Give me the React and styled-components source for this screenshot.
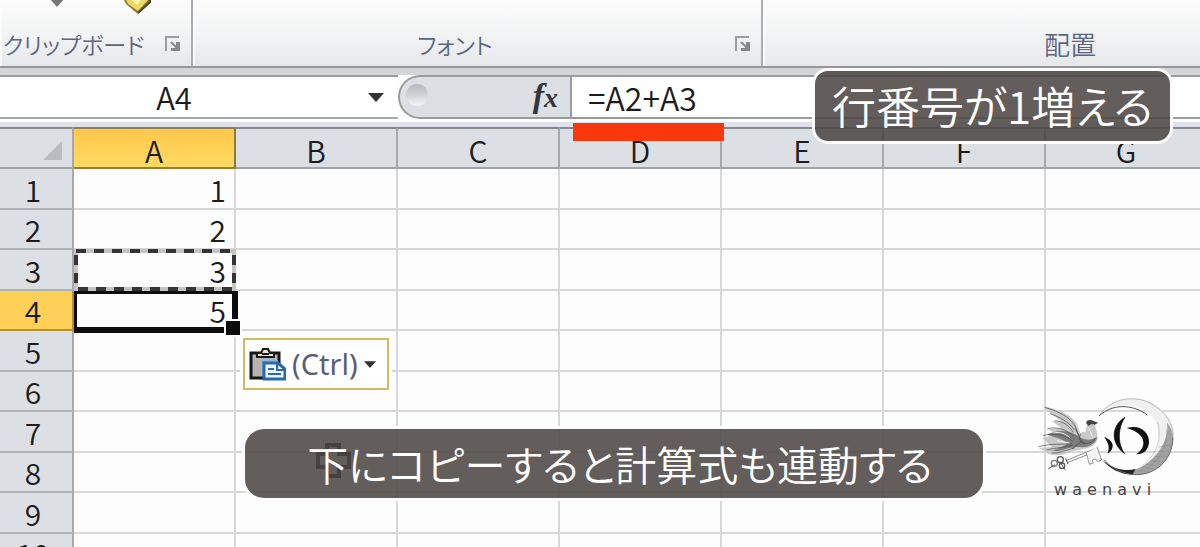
import React from 'react';
import styled, { createGlobalStyle } from 'styled-components';

const GlobalStyle = createGlobalStyle`
  * {
    box-sizing: border-box;
  }

  body {
    margin: 0;
    background: #fdfdfd;
    font-family: 'Noto Sans CJK JP', 'Liberation Sans', sans-serif;
    color: #1c1c1c;
  }

  button,
  input {
    margin: 0;
    padding: 0;
    border: 0;
    background: none;
    font: inherit;
    color: inherit;
  }

  svg {
    display: block;
  }
`;

const Screen = styled.main`
  position: relative;
  height: 100vh;
  overflow: hidden;
`;

const Ribbon = styled.div`
  display: flex;
  height: 68px;
  overflow: hidden;
  background: linear-gradient(#fcfcfc, #f3f4f5 50%, #e6e8ea);
  border-bottom: 2px solid #94989c;
`;

const Group = styled.section`
  flex: 0 0 ${(props) => props.$width}px;
  min-width: 0;
  display: flex;
  flex-direction: column;
  border-right: 2px solid #a9acb0;
  box-shadow: inset 2px 0 #fbfbfb;
`;

const GroupTools = styled.div`
  display: flex;
  gap: 60px;
  height: 26px;
  padding-left: 50px;
`;

const GroupFooter = styled.div`
  display: flex;
  align-items: center;
  height: 36px;

  h2 {
    flex: 1;
    min-width: 0;
    margin: 0;
    font-size: ${(props) => (props.$kanji ? 26 : 23)}px;
    font-weight: 350;
    line-height: 36px;
    text-align: center;
    white-space: nowrap;
    font-feature-settings: 'palt';
    color: #5d6580;
  }

  button {
    flex: 0 0 44px;
    padding-left: 18px;
  }
`;

const FormulaBar = styled.div`
  display: flex;
  height: 59px;
  padding: 7px 0 8px;
  background: linear-gradient(#d3d6d9 7px, #fdfdfd 7px, #fdfdfd 54px, #dfe2ea 54px);
`;

const NameBox = styled.div`
  flex: 0 0 398px;
  display: flex;
  align-items: center;
  background: #fff;
  border-top: 2px solid #999c9f;
  border-bottom: 2px solid #a6a9ac;

  input {
    width: 348px;
    font-size: 31px;
    font-weight: 350;
    line-height: 36px;
    text-align: center;
  }

  button {
    margin-left: 20px;
  }
`;

const FunctionArea = styled.div`
  flex: 0 0 172px;
  display: flex;
  align-items: center;
  justify-content: space-between;
  padding: 0 12px 0 6px;
  background: #dce0e4;
  border: 2px solid #999c9f;
  border-right: 0;
  border-radius: 22px 0 0 22px;
`;

const Knob = styled.span`
  width: 22px;
  height: 22px;
  margin-bottom: 4px;
  border-radius: 50%;
  background: linear-gradient(#b4b8bc, #d0d3d6 50%, #f6f6f6);
`;

const FunctionButton = styled.button`
  && {
    font-family: 'Liberation Serif', serif;
    font-size: 34px;
    font-style: italic;
    font-weight: 700;
    line-height: 34px;
    color: #33373b;
  }

  small {
    font-size: 28px;
  }
`;

const FormulaField = styled.div`
  position: relative;
  flex: 1;
  background: #fff;
  border: 2px solid #999c9f;
  border-right: 0;

  input {
    width: 100%;
    padding: 2px 0 0 16px;
    font-size: 32px;
    font-weight: 350;
    line-height: 36px;
  }
`;

const RedMarker = styled.span`
  position: absolute;
  z-index: 1;
  top: 46px;
  left: 1px;
  width: 151px;
  height: 18px;
  background: #f8370c;
`;

const Grid = styled.table`
  width: 1208px;
  table-layout: fixed;
  border-collapse: separate;
  border-spacing: 0;
  font-size: 30px;
  line-height: 34px;

  th,
  td {
    padding: 0;
    font-weight: 350;
  }

  thead th {
    padding-top: 4px;
  }

  thead tr {
    height: 42px;
  }

  tbody tr {
    height: 40px;
  }

  tbody tr:nth-child(odd) {
    height: 41px;
  }
`;

const ColumnHead = styled.th`
  background: ${(props) => (props.$active ? 'linear-gradient(#ffc84c, #ffdb62)' : '#dce0e4')};
  border-top: 2px solid ${(props) => (props.$active ? '#8f8058' : '#85898e')};
  border-right: 2px solid ${(props) => (props.$active ? '#8d7a3c' : '#a5a9ad')};
  border-bottom: 2px solid ${(props) => (props.$active ? '#9a7c35' : '#a0a4a8')};
`;

const CornerHead = styled(ColumnHead)`
  svg {
    margin-left: 43px;
  }
`;

const RowHead = styled.th`
  && {
    padding-right: 6px;
  }
  background: ${(props) => (props.$active ? '#ffd058' : '#dce0e4')};
  border-right: 2px solid ${(props) => (props.$active ? '#b38f3a' : '#a5a9ad')};
  border-bottom: 2px solid ${(props) => (props.$active ? '#b38f3a' : '#b0b3b6')};
`;

const Cell = styled.td`
  position: relative;
  && {
    padding-right: 8px;
  }
  text-align: right;
  background: #fdfdfd;
  border-right: 2px solid #d7d8d9;
  border-bottom: 2px solid #d7d8d9;
`;

const Marquee = styled.svg`
  position: absolute;
  top: -1px;
  left: 0;
`;

const Selection = styled.span`
  position: absolute;
  z-index: 1;
  top: 0;
  left: 0;
  right: -4px;
  bottom: -4px;
  border: solid #0c0c0c;
  border-width: 3px 6px 6px 3px;

  &::after {
    content: '';
    position: absolute;
    right: -10px;
    bottom: -10px;
    width: 14px;
    height: 14px;
    background: #0c0c0c;
    border: 2px solid #fdfdfd;
  }
`;

const PasteOptions = styled.button`
  && {
    position: absolute;
    z-index: 2;
    top: 47px;
    left: 169px;
    display: flex;
    align-items: center;
    gap: 6px;
    width: 146px;
    height: 52px;
    padding-left: 4px;
    background: #fff;
    border: 2px solid #d3b961;
    box-shadow: 0 0 0 3px #fdfdfd;
    font-family: 'Noto Sans', sans-serif;
    font-size: 29px;
    font-weight: 400;
    color: #5a5e74;
  }
`;

const Caption = styled.p`
  margin: 0;
  padding: 0;
  background: rgba(77, 72, 69, 0.88);
  border: 3px solid #fdfdfd;
  font-weight: 350;
  line-height: 68px;
  text-align: center;
  white-space: nowrap;
  font-feature-settings: 'palt';
  color: #fff;
`;

const TopCaption = styled(Caption)`
  position: absolute;
  z-index: 3;
  top: 68px;
  right: 27px;
  width: 361px;
  height: 76px;
  border-radius: 16px;
  font-size: 44px;
`;

const BottomCaption = styled(Caption)`
  position: absolute;
  z-index: 3;
  top: 426px;
  left: 242px;
  width: 744px;
  height: 75px;
  padding-left: 12px;
  border-radius: 22px;
  font-size: 41px;
`;

const CellCursor = styled.svg`
  position: absolute;
  z-index: 2;
  top: 443px;
  left: 316px;
`;

const Brand = styled.div`
  position: absolute;
  z-index: 2;
  top: 397px;
  right: 26px;
  width: 137px;

  p {
    margin: 1px 0 0 17px;
    font-family: 'DejaVu Sans', sans-serif;
    font-size: 16px;
    line-height: 24px;
    white-space: nowrap;
    color: #444;
  }
`;

const Triangle = ({ width = 16, height = 9, color = '#333' }) => (
  <svg width={width} height={height} viewBox="0 0 16 9" aria-hidden="true">
    <path d="M0 0h16L8 9z" fill={color} />
  </svg>
);

const LauncherIcon = () => (
  <svg width="16" height="16" viewBox="0 0 16 16" fill="none" aria-hidden="true">
    <path d="M1 15V1h13" stroke="#9a9da2" strokeWidth="2" />
    <path d="M6 6l6 6" stroke="#85898e" strokeWidth="2" />
    <path d="M15 6v9H6v-3h5V6z" fill="#85898e" />
  </svg>
);

const BrushTip = () => (
  <svg width="28" height="14" viewBox="0 0 28 14" aria-hidden="true">
    <path d="M0 0h27v2L14 14 2 4z" fill="#8d7830" />
    <path d="M2 0h22L14 11 4 4z" fill="#efd861" />
    <path d="M8 0h9l-4 5z" fill="#fcf3b0" />
    <path d="M26 0v2L14 13" stroke="#4c4630" strokeWidth="2" fill="none" />
  </svg>
);

const PasteIcon = () => (
  <svg width="37" height="33" viewBox="0 0 37 33" fill="none" aria-hidden="true">
    <path d="M2 5h28v25H2z" fill="#b9b3b0" stroke="#171717" strokeWidth="3" />
    <path d="M8 9V5h4l2-4h5l2 4h4v4z" fill="#efe6cf" stroke="#171717" strokeWidth="2" />
    <path d="M13 6h7" stroke="#171717" strokeWidth="2" />
    <path d="M13 28V12h16v4H16z" fill="#8bb4e6" />
    <path d="M15 15h14l7 6v10H15z" fill="#eef6fd" stroke="#2768b0" strokeWidth="3" />
    <path d="M28 15v7h8M19 21h6M19 26h13" stroke="#2768b0" strokeWidth="2" />
  </svg>
);

const BirdAndMoon = () => (
  <svg width="137" height="80" viewBox="50 20 411 240" fill="none" aria-label="waenavi">
    {/* crescent ring */}
    <path d="M236 78C262 38 305 22 350 26c65 5 109 56 108 116-2 67-51 110-109 111-42 0-78-16-104-45 32 28 72 38 106 27 46-16 69-57 64-105-5-42-24-68-61-80-43-14-83-3-118 28z" fill="#f0f0f0" />
    <path d="M440 98c9 55-40 119-89 137-20 9-52 4-72-4 22 16 44 22 70 22 58-1 107-44 109-111 0-18-8-34-18-44z" fill="#a2a2a2" />
    <path d="M245 208c32 27 65 37 101 28l-10 17c-37-2-68-18-91-45z" fill="#222" />
    <path d="M458 142c-2 67-51 110-109 111-38-1-75-17-98-45" stroke="#666" strokeWidth="3" />
    <path d="M236 77c35-55 110-66 162-34 48 30 62 67 60 99" stroke="#999" strokeWidth="2" />
    <path d="M236 77c39-36 97-38 145-3" stroke="#555" strokeWidth="3" />
    <path d="M412 96c14 54-6 99-46 130M438 118c4 45-12 80-48 108M356 240l26 3M365 230l34 5M379 222l31 4M391 211l30 2M401 198l34 0M410 184l36-3M414 170l38-6" stroke="#777" strokeWidth="1" />
    {/* strokes inside the moon */}
    <path d="M251 139c18 7 26 17 26 27 0 11-7 20-15 23 6-19 3-31-11-50z" fill="#111" />
    <path d="M314 81c-20 30-25 75-1 109-42-29-42-84 1-109z" fill="#111" stroke="#111" strokeWidth="2" />
    <path d="M319 113c42-12 68 14 67 43-2 25-17 37-39 36 33-20 34-62-28-79z" fill="#111" />
    {/* bird */}
    <path d="M70 49c37 5 80 22 98 48l12 31 17-5 2-23c-4-10 7-14 16-11l18 8-9 6c6 27 15 43-2 59-18 18-49 13-73 24-28 13-63 12-76-3l-17-10 39-3-30-27 47-9-29-17 41-3-30-22 31 3c-17-16-37-25-55-45z" fill="#c8c8c8" />
    <path d="M80 134c34-22 78-12 104 10 18 8 34 3 46-4-1 20-26 33-52 30-34-3-48 14-82 12 22-10 40-16 46-24-20-14-40-18-62-24z" fill="#7d7d7d" />
    <path d="M73 51c35 9 76 28 91 56l12 30M89 70c30 11 57 24 72 48M103 91c25 2 44 14 55 35M81 115c30-7 57 2 81 24M68 136c39-10 63-4 89 17M55 169c41-11 68-5 100-9M79 179c29-8 54-7 78-14M93 188c25 2 43-10 70-15M181 130c-8 15-1 27 13 31M180 151c18 13 31 10 45-7M164 114l18 35M188 151l-33 24" stroke="#444" strokeWidth="2" />
    <path d="M197 97c4-9 14-9 20-6l16 6-10 6c-8-2-14-2-18 4z" fill="#444" />
    <path d="M99 128c20-5 39 3 50 15M110 151l38 7M205 112l12 27" stroke="#f2f2f2" strokeWidth="3" />
    {/* key */}
    <path d="M137 211l90-37M141 217l91-36" stroke="#555" strokeWidth="2" />
    <path d="M198 188l9 34 12-4-3-9 11-3 4 8 13-5-14-39" fill="#f2f2f2" stroke="#666" strokeWidth="2" />
    <circle cx="120" cy="208" r="9" stroke="#555" strokeWidth="4" />
    <circle cx="102" cy="219" r="9" stroke="#777" strokeWidth="4" />
    <circle cx="125" cy="226" r="8" stroke="#555" strokeWidth="4" />
    <path d="M84 235l20-12M135 239l-13-19M136 204l7 18" stroke="#555" strokeWidth="3" />
  </svg>
);

const columns = ['A', 'B', 'C', 'D', 'E', 'F', 'G'];
const rows = [1, 2, 3, 4, 5, 6, 7, 8, 9, 10];
const values = { A1: 1, A2: 2, A3: 3, A4: 5 };

const Sheet = () => (
  <Grid>
    <colgroup>
      <col width="74" />
      {columns.map((column) => (
        <col key={column} width="162" />
      ))}
    </colgroup>
    <thead>
      <tr>
        <CornerHead>
          <svg width="19" height="19" viewBox="0 0 19 19" aria-hidden="true">
            <path d="M19 0v19H0z" fill="#b9bcc0" />
          </svg>
        </CornerHead>
        {columns.map((column) => (
          <ColumnHead key={column} scope="col" $active={column === 'A'}>
            {column}
          </ColumnHead>
        ))}
      </tr>
    </thead>
    <tbody>
      {rows.map((row) => (
        <tr key={row}>
          <RowHead scope="row" $active={row === 4}>
            {row}
          </RowHead>
          {columns.map((column) => {
            const name = column + row;
            return (
              <Cell key={name}>
                {values[name]}
                {name === 'A3' && (
                  <Marquee width="162" height="42" fill="none" strokeWidth="4" aria-hidden="true">
                    <path d="M2 2h158v38H2z" stroke="#c4c4c4" />
                    <path d="M2 2h158v38H2z" stroke="#353535" strokeDasharray="10 8" />
                  </Marquee>
                )}
                {name === 'A4' && (
                  <>
                    <Selection />
                    <PasteOptions type="button">
                      <PasteIcon />
                      (Ctrl)
                      <Triangle width={12} height={7} />
                    </PasteOptions>
                  </>
                )}
              </Cell>
            );
          })}
        </tr>
      ))}
    </tbody>
  </Grid>
);

const App = () => {
  return (
    <Screen>
      <GlobalStyle />
      <Ribbon>
        <Group $width={193}>
          <GroupTools>
            <Triangle width={14} height={7} color="#777" />
            <BrushTip />
          </GroupTools>
          <GroupFooter>
            <h2>クリップボード</h2>
            <button type="button" aria-label="クリップボード">
              <LauncherIcon />
            </button>
          </GroupFooter>
        </Group>
        <Group $width={570}>
          <GroupTools />
          <GroupFooter>
            <h2>フォント</h2>
            <button type="button" aria-label="フォント">
              <LauncherIcon />
            </button>
          </GroupFooter>
        </Group>
        <Group $width={616}>
          <GroupTools />
          <GroupFooter $kanji>
            <h2>配置</h2>
          </GroupFooter>
        </Group>
      </Ribbon>
      <FormulaBar>
        <NameBox>
          <input aria-label="名前ボックス" defaultValue="A4" />
          <button type="button" aria-label="名前の一覧">
            <Triangle />
          </button>
        </NameBox>
        <FunctionArea>
          <Knob />
          <FunctionButton type="button" aria-label="関数の挿入">
            f<small>x</small>
          </FunctionButton>
        </FunctionArea>
        <FormulaField>
          <input aria-label="数式バー" defaultValue="=A2+A3" />
          <RedMarker />
        </FormulaField>
      </FormulaBar>
      <Sheet />
      <CellCursor width="36" height="36" viewBox="0 0 36 36" aria-hidden="true">
        <path d="M11 2h12v9h10v13H23v9H11v-9H2V11h9z" fill="#fff" stroke="#111" strokeWidth="4" />
      </CellCursor>
      <TopCaption>行番号が1増える</TopCaption>
      <BottomCaption>下にコピーすると計算式も連動する</BottomCaption>
      <Brand>
        <BirdAndMoon />
        <p>w a e n a v i</p>
      </Brand>
    </Screen>
  );
};

export default App;
